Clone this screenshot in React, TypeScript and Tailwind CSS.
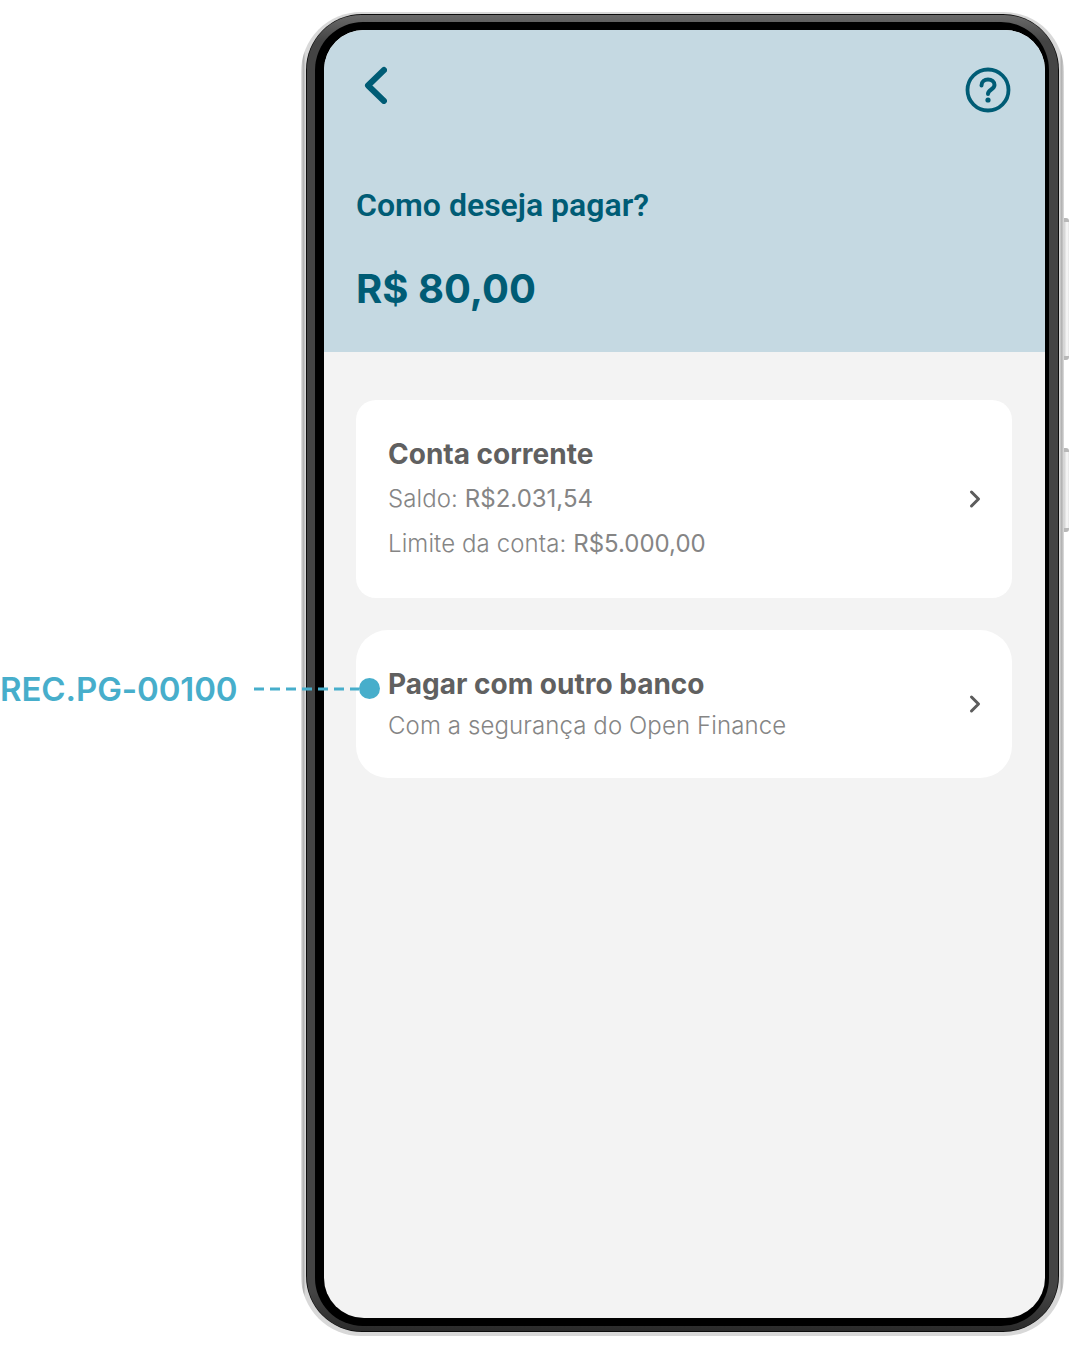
import { ChevronRight } from 'lucide-react'

function BackIcon() {
  return (
    <svg width="24" height="38" viewBox="0 0 24 38" fill="none">
      <path d="M21 4 L5 19.5 L21 35" stroke="#005c75" strokeWidth="6" strokeLinecap="round" strokeLinejoin="round" />
    </svg>
  )
}

function HelpIcon() {
  return (
    <svg width="46" height="46" viewBox="0 0 46 46" fill="none">
      <circle cx="23" cy="23" r="20.5" stroke="#005c75" strokeWidth="3.8" />
      <path d="M16.5 18.5 C16.5 14.5 19.5 12.5 23 12.5 C26.8 12.5 29.5 15 29.5 18 C29.5 22.5 23 22.5 23 27" stroke="#005c75" strokeWidth="4" strokeLinecap="round" />
      <circle cx="23" cy="33" r="2.6" fill="#005c75" />
    </svg>
  )
}

function Annotation() {
  return (
    <div className="absolute left-0 top-[670px] flex items-center">
      <span className="w-[254px] text-[33px] font-semibold leading-[38px] tracking-[-0.1px] text-[#47aecb] [font-family:Inter,sans-serif]">REC.PG-00100</span>
      <svg width="105" height="4" viewBox="0 0 105 4">
        <line x1="0" y1="2" x2="105" y2="2" stroke="#47aecb" strokeWidth="3" strokeDasharray="10 6" />
      </svg>
      <span className="-mt-[1px] h-[21px] w-[21px] rounded-full bg-[#47aecb]" />
    </div>
  )
}

export default function App() {
  return (
    <div className="relative h-[1348px] w-[1070px] overflow-hidden bg-white pl-[301px] pt-[12px] [font-family:Inter,sans-serif]">
      {/* side buttons */}
      <div className="absolute left-[1064px] top-[218px] h-[142px] w-[5px] rounded-r-[3px] border-y-[4px] border-[#b8b8b8] bg-[linear-gradient(90deg,#d0d0d0,#fafafa_60%,#e4e4e4)]" />
      <div className="absolute left-[1064px] top-[448px] h-[84px] w-[5px] rounded-r-[3px] border-y-[4px] border-[#b8b8b8] bg-[linear-gradient(90deg,#d0d0d0,#fafafa_60%,#e4e4e4)]" />

      {/* phone frame */}
      <div className="h-[1324px] w-[763px] rounded-[60px] bg-[linear-gradient(90deg,#e8e8e8,#b0b0b0_0.3%,#d8d8d8_0.6%,#d8d8d8_99.4%,#b0b0b0_99.7%,#e0e0e0)] pb-[4px] pl-[5px] pr-[5px] pt-[2px]">
        <div className="h-full w-full rounded-[56px] bg-[#0c0c0c] p-[1px]">
          <div className="h-full w-full rounded-[54px] bg-[linear-gradient(180deg,#6a6a6a,#444444_2%,#444444_97%,#2a2a2a)] pb-[5px] pl-[8px] pr-[9px] pt-[7px]">
            <div className="h-full w-full rounded-[48px] bg-black pb-[8px] pl-[9px] pr-[4px] pt-[8px]">
              <div className="flex h-full w-full flex-col overflow-hidden rounded-[40px] bg-[#f3f3f3]">
                <header className="h-[322px] shrink-0 bg-[#c5d9e2] px-[32px] pt-[36px] text-[#005c75]">
                  <div className="flex items-start justify-between pl-[7px] pr-[2px]">
                    <BackIcon />
                    <div className="mt-[1px]"><HelpIcon /></div>
                  </div>
                  <h1 className="mt-[73px] text-[32px] font-semibold leading-[38px] [font-family:Roboto,sans-serif]">Como deseja pagar?</h1>
                  <p className="mt-[41px] text-[40px] font-bold leading-[48px]">R$ 80,00</p>
                </header>

                <main className="flex flex-col gap-[32px] pl-[32px] pr-[33px] pt-[48px]">
                  <div className="flex h-[198px] items-center justify-between rounded-[20px] bg-white pl-[32px] pr-[23px]">
                    <div>
                      <p className="text-[28px] font-bold leading-[32px] text-[#606060]">Conta corrente</p>
                      <p className="mt-[13px] text-[24px] font-light leading-[32px] tracking-[0.1px] text-[#858585]">Saldo: <span className="font-normal tracking-normal">R$2.031,54</span></p>
                      <p className="mt-[12px] pt-[1px] text-[24px] font-light leading-[32px] tracking-[0.1px] text-[#858585]">Limite da conta: <span className="font-normal tracking-normal">R$5.000,00</span></p>
                    </div>
                    <ChevronRight className="h-[28px] w-[28px] text-[#5c5c5c]" strokeWidth={2.6} />
                  </div>

                  <div className="flex h-[148px] items-center justify-between rounded-[32px] bg-white pl-[32px] pr-[23px]">
                    <div className="pt-[2px]">
                      <p className="text-[28px] font-bold leading-[32px] text-[#606060]">Pagar com outro banco</p>
                      <p className="mt-[10px] text-[24px] font-light leading-[32px] tracking-[0.1px] text-[#858585]">Com a segurança do Open Finance</p>
                    </div>
                    <ChevronRight className="h-[28px] w-[28px] text-[#5c5c5c]" strokeWidth={2.6} />
                  </div>
                </main>
              </div>
            </div>
          </div>
        </div>
      </div>

      <Annotation />
    </div>
  )
}
